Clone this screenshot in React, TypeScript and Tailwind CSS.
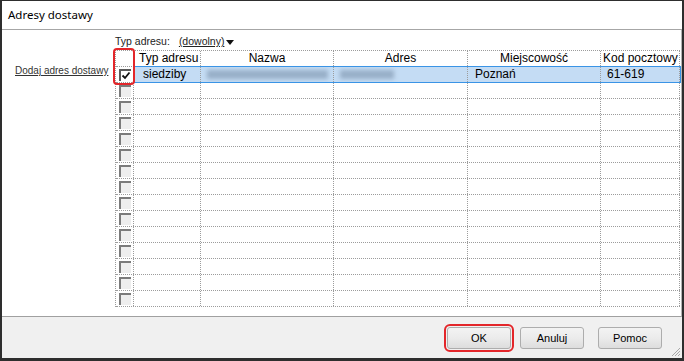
import React from "react";

const cols = "grid grid-cols-[18px_67px_133px_134px_133px_79px]";
const cell = "border-r border-dotted border-[#9c9c9c] h-full";

function EmptyBox() {
  return <div className="w-[12px] h-[12px] bg-[#eeeeee] border-t-2 border-l-2 border-[#7b7b7b]" />;
}

function CheckedBox() {
  return (
    <div className="relative w-[12px] h-[12px] bg-white border-t-2 border-l-2 border-[#5a5a5a]">
      <svg className="absolute left-[0px] top-[0px]" width="10" height="10" viewBox="0 0 10 10">
        <path d="M1.5 4.5 L4 7 L8.5 1.5" stroke="#111" strokeWidth="1.8" fill="none" />
      </svg>
    </div>
  );
}

function Row() {
  return (
    <div className={`${cols} h-[16px] border-b border-dotted border-[#9c9c9c]`}>
      <div className={`${cell} flex items-center justify-center`}>
        <EmptyBox />
      </div>
      <div className={cell} />
      <div className={cell} />
      <div className={cell} />
      <div className={cell} />
      <div className={cell} />
    </div>
  );
}

function Button({ label, className = "" }: { label: string; className?: string }) {
  return (
    <button
      className={`w-[64px] h-[22px] rounded-[3px] border border-[#adadad] bg-gradient-to-b from-[#f3f3f3] via-[#ebebeb] to-[#dddddd] text-[11px] text-black ${className}`}
      style={{ fontFamily: '"Liberation Sans", Arial, sans-serif' }}
    >
      {label}
    </button>
  );
}

export default function App() {
  const emptyRows = Array.from({ length: 14 });
  return (
    <div
      className="w-[684px] h-[361px] flex flex-col border-l-2 border-r-2 border-t border-b-[3px] border-[#2e2e2e] bg-white overflow-hidden"
      style={{ fontFamily: '"Liberation Sans", Arial, sans-serif' }}
    >
      <div className="h-[29px] shrink-0 border-b border-[#a6a6a6] flex items-center pl-[6px]">
        <span className="text-[11.5px] text-black" style={{ fontFamily: '"Noto Sans", sans-serif' }}>
          Adresy dostawy
        </span>
      </div>

      <div className="h-[287px] shrink-0 flex border-b border-[#a0a0a0] border-r border-r-[#b4b4b4]">
        <div className="w-[113px] shrink-0 pt-[27px] pl-[13px]">
          <span className="text-[10px] text-[#333] underline">Dodaj adres dostawy</span>
        </div>
        <div className="flex flex-col pt-[4px]">
          <div className="h-[16px] flex items-center text-[10.5px] text-[#222]">
            <span>Typ adresu:</span>
            <span className="ml-[9px] underline">(dowolny)</span>
            <svg className="ml-[2px]" width="8" height="5" viewBox="0 0 8 5">
              <path d="M0 0 H8 L4 5 Z" fill="#111" />
            </svg>
          </div>

          <div className="relative w-[565px] border-l border-t border-dotted border-[#9c9c9c] text-[12px] text-black">
            <div className={`${cols} h-[16px] border-b border-dotted border-[#9c9c9c] leading-[15px]`}>
              <div className={cell} />
              <div className={`${cell} pl-[5px]`}>Typ adresu</div>
              <div className={`${cell} text-center`}>Nazwa</div>
              <div className={`${cell} text-center`}>Adres</div>
              <div className={`${cell} text-center`}>Miejscowość</div>
              <div className={`${cell} pl-[2px] whitespace-nowrap overflow-hidden`}>Kod pocztowy</div>
            </div>

            <div className={`relative ${cols} h-[16px] border-b border-dotted border-[#9c9c9c] leading-[15px]`}>
              <div className={`${cell} flex items-center justify-center`}>
                <CheckedBox />
              </div>
              <div className={`${cell} bg-[#c4dcf4] pl-[9px]`}>siedziby</div>
              <div className={`${cell} bg-[#c4dcf4] flex items-center pl-[6px]`}>
                <div className="w-[121px] h-[9px] bg-[#98afc8] blur-[2px]" />
              </div>
              <div className={`${cell} bg-[#c4dcf4] flex items-center pl-[6px]`}>
                <div className="w-[54px] h-[9px] bg-[#98afc8] blur-[2px]" />
              </div>
              <div className={`${cell} bg-[#c4dcf4] pl-[7px]`}>Poznań</div>
              <div className={`${cell} bg-[#c4dcf4] pl-[6px]`}>61-619</div>
              <div className="absolute left-[18px] right-[-1px] top-[-1px] bottom-[-1px] border border-[#3a94e6] pointer-events-none" />
            </div>

            {emptyRows.map((_, i) => (
              <Row key={i} />
            ))}

            <div className="absolute left-[-3px] top-[-3px] w-[22px] h-[37px] border-2 border-[#e3262a] rounded-[4px]" />
          </div>
        </div>
      </div>

      <div className="relative flex-1 bg-[#f0f0f0] flex justify-end items-start pt-[10px] pr-[20px]">
        <Button label="OK" className="outline-2 outline-[#e3262a] outline-offset-[1px]" />
        <Button label="Anuluj" className="ml-[9px]" />
        <Button label="Pomoc" className="ml-[14px]" />
        <svg className="absolute right-[1px] bottom-[1px]" width="11" height="11" viewBox="0 0 11 11">
          <path d="M10 2 L2 10 M10 5 L5 10 M10 8 L8 10" stroke="#a8a8a8" strokeWidth="1" />
        </svg>
      </div>
    </div>
  );
}
